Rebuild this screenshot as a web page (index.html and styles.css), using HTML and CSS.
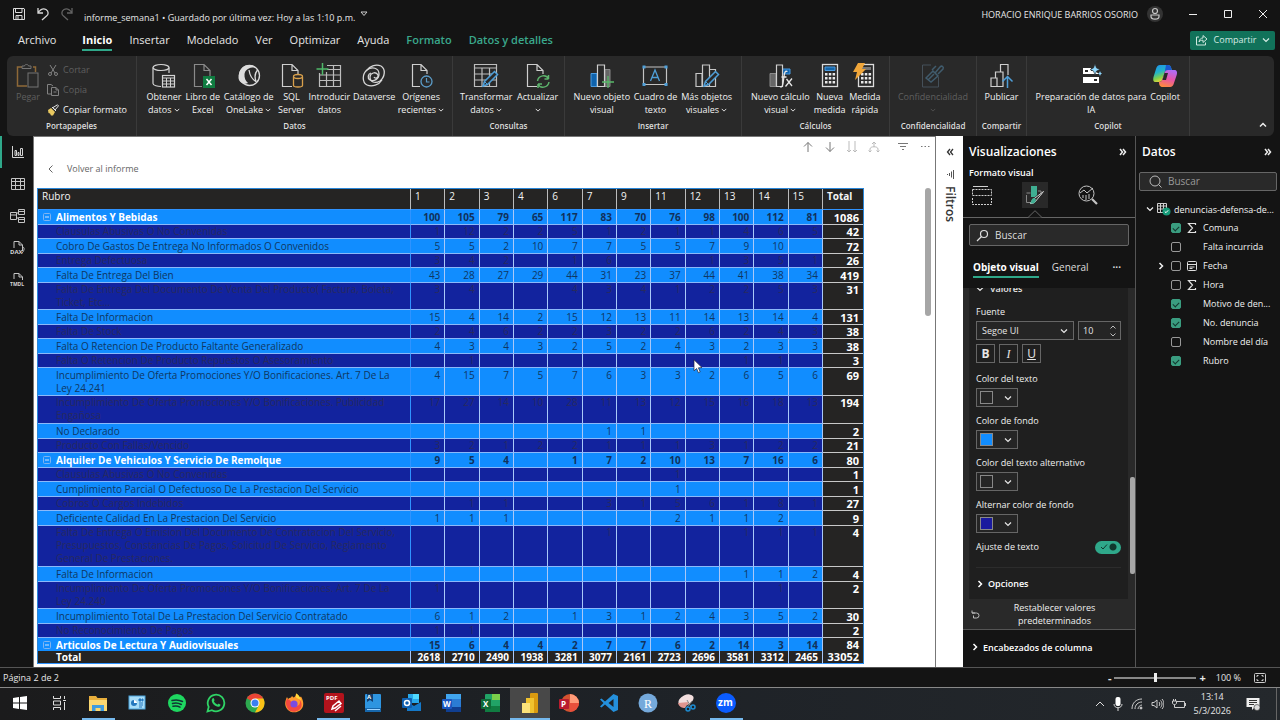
FILE: index.html
```html
<!DOCTYPE html>
<html lang="es">
<head>
<meta charset="utf-8">
<title>informe_semana1</title>
<link rel="stylesheet" href="styles.css">
</head>
<body>
<svg class="defs" aria-hidden="true">
  <symbol id="cv" viewBox="0 0 8 8"><path d="M1 2.5 4 5.5 7 2.5" fill="none" stroke="currentColor" stroke-width="1.2"/></symbol>
  <symbol id="cr" viewBox="0 0 8 8"><path d="M2.5 1 5.5 4 2.5 7" fill="none" stroke="currentColor" stroke-width="1.5"/></symbol>
  <symbol id="minus" viewBox="0 0 8 8"><rect x=".5" y=".5" width="7" height="7" rx="1" fill="none" stroke="#7fb4f0"/><path d="M2 4h4" stroke="#cfe4ff"/></symbol>
  <symbol id="sigma" viewBox="0 0 10 12"><path d="M8.500 3V1.500H1.500L5.500 6 1.500 10.500h7V9" fill="none" stroke="#e0e0e0" stroke-width="1.200"/></symbol>
  <symbol id="pencil" viewBox="0 0 18 18"><path d="M2 16l1.500-4.500L13.500 1.500l3 3L6.500 14.500z" fill="#292929" stroke="#4f9fd8" stroke-width="1.500"/><path d="M4 12l2.500 2.500" stroke="#4f9fd8"/></symbol>
  <symbol id="calc" viewBox="0 0 18 26"><rect x="1.500" y="1.500" width="15" height="22" fill="none" stroke="#dcdcdc" stroke-width="1.300"/><g fill="#e8e8e8"><path d="M4 10h2.500v2.500H4zM7.800 10h2.500v2.500H7.800zM11.600 10h2.500v2.500h-2.500zM4 14h2.500v2.500H4zM7.800 14h2.500v2.500H7.800zM11.600 14h2.500v2.500h-2.500zM4 18h2.500v2.500H4zM7.800 18h2.500v2.500H7.800zM11.600 18h2.500v2.500h-2.500z"/></g></symbol>
</svg>

<header class="titlebar">
  <button class="tb" aria-label="Guardar"><svg width="14" height="14" viewBox="0 0 14 14" fill="none" stroke="#dcdcdc"><path d="M1.500 1.500h10.500l.5.5v10.500h-11z"/><path d="M3.500 1.500v4h6.500v-4M4 12.500v-4h6v4M6 9v3"/></svg></button>
  <button class="tb" aria-label="Deshacer"><svg width="14" height="14" viewBox="0 0 14 14" fill="none" stroke="#d8d8d8" stroke-width="1.300"><path d="M2 1v5h5M2 6C4 3 7 1 10 2.500c3 2 2.500 5 .5 6.500L6 13"/></svg></button>
  <button class="tb off" aria-label="Rehacer"><svg width="14" height="14" viewBox="0 0 14 14" fill="none" stroke="#777" stroke-width="1.300"><path d="M12 1v5H7M12 6C10 3 7 1 4 2.500c-3 2-2.500 5-.5 6.500L8 13"/></svg></button>
  <span class="doc">informe_semana1 • Guardado por última vez: Hoy a las 1:10 p.m.</span>
  <svg class="tri" width="8" height="6" viewBox="0 0 8 6"><path d="M1 1h6L4 4.500z" fill="none" stroke="#ccc"/></svg>
  <span class="user">HORACIO ENRIQUE BARRIOS OSORIO</span>
  <span class="avatar"><svg width="12" height="14" viewBox="0 0 12 14" fill="none" stroke="#c8c8c8" stroke-width="1.200"><circle cx="6" cy="4" r="2.500"/><path d="M2 8h8v1.500C10 13 2 13 2 9.500z"/></svg></span>
  <div class="winbtns">
    <button aria-label="Minimizar"><svg width="10" height="10"><path d="M1 5.500h8" stroke="#eee"/></svg></button>
    <button aria-label="Maximizar"><svg width="10" height="10"><path d="M1.500 1.500h7v7h-7z" stroke="#eee" fill="none"/></svg></button>
    <button aria-label="Cerrar"><svg width="10" height="10"><path d="M1 1l8 8M9 1l-8 8" stroke="#eee"/></svg></button>
  </div>
</header>

<nav class="tabs">
  <a href="#">Archivo</a><a href="#" class="on">Inicio</a><a href="#">Insertar</a><a href="#">Modelado</a><a href="#">Ver</a><a href="#">Optimizar</a><a href="#">Ayuda</a><a href="#" class="ctx">Formato</a><a href="#" class="ctx">Datos y detalles</a>
  <button class="share"><svg width="13" height="12" viewBox="0 0 13 12" fill="none" stroke="#cfe8df"><path d="M4 3H1.500v8h9V8.500M4 8c.5-3 2-4 4-4V1.500L12 5 8 8.500V6.200C6 6.200 5 6.500 4 8z"/></svg><span>Compartir</span><svg width="8" height="8"><use href="#cv"/></svg></button>
</nav>

<section class="ribbon">
  <div class="group g-clip">
    <div class="clip">
      <button class="rb off"><svg width="24" height="26" viewBox="0 0 24 26" fill="none"><path d="M6 4H1.500v19H11M17 4h2.500v5" stroke="#a87a3c" stroke-width="1.500"/><path d="M6 5.500V3h2.500c0-2 4-2 4 0H15v2.500z" stroke="#888"/><rect x="12" y="10" width="10" height="14" stroke="#888"/></svg><span>Pegar</span></button>
      <div class="clip-list">
        <button class="sm off"><svg width="12" height="12" viewBox="0 0 12 12" fill="none" stroke="#999"><path d="M3 1l5 8M9 1L4 9"/><circle cx="3" cy="10" r="1.500"/><circle cx="9" cy="10" r="1.500"/></svg><span>Cortar</span></button>
        <button class="sm off"><svg width="12" height="12" viewBox="0 0 12 12" fill="none" stroke="#999"><path d="M4 10H.5V.5H4L6 2M4.500 3.500H9L11.500 6v5.500h-7zM9 3.500V6h2.500M6.500 8h3"/></svg><span>Copia</span></button>
        <button class="sm"><svg width="12" height="12" viewBox="0 0 12 12"><path d="M1 6l3-2 4 4-2 3.500H4L3 9.500 1.500 9z" fill="#e8c860"/><path d="M5 3l4 4M6 3.500L10.500.8l1 1L8 6z" fill="#292929" stroke="#e8e8e8"/></svg><span>Copiar formato</span></button>
      </div>
    </div>
    <h2>Portapapeles</h2>
  </div>
  <div class="group g-data">
    <div class="btns">
      <button class="rb"><svg width="24" height="26" viewBox="0 0 24 26" fill="none" stroke="#d4d4d4" stroke-width="1.200"><ellipse cx="9" cy="4.500" rx="8" ry="3"/><path d="M1 4.500v16c0 2 5 3 8 3M17 4.500V10"/><rect x="10.500" y="12.500" width="12" height="11.500" fill="#292929"/><path d="M10.500 15h12M10.500 18h12M10.500 21h12M14.500 15v9M18.500 15v9" stroke-width="1"/></svg><span>Obtener<br>datos <svg class="c"><use href="#cv"/></svg></span></button>
      <button class="rb"><svg width="24" height="26" viewBox="0 0 24 26" fill="none"><path d="M11 23.500H3.500v-22H13l6 6V13M13 1.500v6h6" stroke="#8a8a8a" stroke-width="1.200"/><rect x="12" y="13" width="12" height="12" fill="#107c41"/><path d="M15.500 16l5 6M20.500 16l-5 6" stroke="#fff" stroke-width="1.500"/></svg><span>Libro de<br>Excel</span></button>
      <button class="rb"><svg width="24" height="26" viewBox="0 0 24 26" fill="none"><circle cx="12.500" cy="12.500" r="10" stroke="#dcdcdc" stroke-width="1.300"/><path d="M1.500 15C1.500 8 5 2.500 11 2.200c4-.4 6 .8 7 2C12 4 8 7 7.500 11c-.3 4 1 7 3.500 9-3 2-9 0-9.500-5z" fill="#dcdcdc"/><path d="M12 7c1 7 4 10 7.500 12M20.500 7C18 10 17 13 19 18" stroke="#dcdcdc" stroke-width="1.300"/></svg><span>Catálogo de<br>OneLake <svg class="c"><use href="#cv"/></svg></span></button>
      <button class="rb"><svg width="24" height="26" viewBox="0 0 24 26" fill="none"><path d="M12 23.500H2.500v-22H12l6 6V11M12 1.500v6h6" stroke="#cfcfcf" stroke-width="1.200"/><path d="M13.500 14v8.500c0 2 9 2 9 0V14" fill="#292929" stroke="#d9a04c" stroke-width="1.300"/><ellipse cx="18" cy="13.500" rx="4.500" ry="2" fill="#292929" stroke="#d9a04c" stroke-width="1.300"/></svg><span>SQL<br>Server</span></button>
      <button class="rb"><svg width="26" height="26" viewBox="0 0 26 26" fill="none"><path d="M3.500 10v13.500h21v-21H11M3.500 12h21M3.500 17.500h21M10.500 9v14.500M17.500 3v20.500M11 6.500h13.500" stroke="#bdbdbd" stroke-width="1.200"/><path d="M6.500 0v12M.5 6h12" stroke="#4fb96a" stroke-width="1.500"/></svg><span>Introducir<br>datos</span></button>
      <button class="rb"><svg width="26" height="26" viewBox="0 0 26 26" fill="none" stroke="#d8d8d8" stroke-width="1.300"><path d="M20 3c5 3 4 11-1 15-5 3-10 1-10-4 0-4 6-6 8-2 1 3-3 4-4 2"/><path d="M6 22C1 19 1 11 6 7c5-4 12-2 12 4 0 5-5 8-9 6-3-2-2-6 1-7"/><path d="M20 3C15 1 8 3 5 8M6 22c5 2 12 0 15-5"/></svg><span>Dataverse</span></button>
      <button class="rb"><svg width="24" height="26" viewBox="0 0 24 26" fill="none"><path d="M11 23.500H3.500v-22H12l6 6V11M12 1.500v6h6" stroke="#cfcfcf" stroke-width="1.200"/><circle cx="17.500" cy="18.500" r="5.500" fill="#292929" stroke="#5b9cc8" stroke-width="1.300"/><path d="M17.500 15v4h3" stroke="#5b9cc8" stroke-width="1.200"/></svg><span>Orígenes<br>recientes <svg class="c"><use href="#cv"/></svg></span></button>
    </div>
    <h2>Datos</h2>
  </div>
  <div class="group g-query">
    <div class="btns">
      <button class="rb"><svg width="26" height="26" viewBox="0 0 26 26"><path d="M1.500 1.500h22v22h-22zM1.500 5h22M1.500 11h22M1.500 17h22M9 5v18.500M16.500 5v18.500" fill="none" stroke="#bdbdbd" stroke-width="1.200"/><use href="#pencil" x="8" y="7" width="18" height="18"/></svg><span>Transformar<br>datos <svg class="c"><use href="#cv"/></svg></span></button>
      <button class="rb"><svg width="24" height="26" viewBox="0 0 24 26" fill="none"><path d="M11 23.500H1.500v-22H11l6 6V11M11 1.500v6h6" stroke="#cfcfcf" stroke-width="1.200"/><path d="M11.500 18c1-6 9-7 11-2v-4m0 4h-4M23 19c-1 6-9 7-11 2v4m0-4h4" stroke="#5db36c" stroke-width="1.500"/></svg><span>Actualizar<br><svg class="c"><use href="#cv"/></svg></span></button>
    </div>
    <h2>Consultas</h2>
  </div>
  <div class="group g-insert">
    <div class="btns">
      <button class="rb"><svg width="26" height="26" viewBox="0 0 26 26" fill="none"><path d="M2 10.500h6v13H2z" fill="#0f63ad" stroke="#4a9be0"/><path d="M16 6.500h5v17h-5z" fill="#666" stroke="#888"/><path d="M8.500 2h7v21.500h-7z" fill="#292929" stroke="#d0d0d0" stroke-width="1.200"/><path d="M19 13v12M13 19h12" stroke="#57b868" stroke-width="1.300"/></svg><span>Nuevo objeto<br>visual</span></button>
      <button class="rb"><svg width="26" height="26" viewBox="0 0 26 26" fill="none"><path d="M1.500 4h23v17.500h-23z" stroke="#c4c4c4" stroke-width="1.200"/><path d="M8.500 18L13 7l4.500 11M10 14.500h6" stroke="#4f9fd8" stroke-width="1.300"/><path d="M.5 2.500h3v3h-3zM22.500 2.500h3v3h-3zM.5 20h3v3h-3zM22.500 20h3v3h-3z" fill="#4f9fd8"/></svg><span>Cuadro de<br>texto</span></button>
      <button class="rb"><svg width="26" height="26" viewBox="0 0 26 26" fill="none"><path d="M2 10.500h6v13H2zM15.500 6.500h6v17h-6zM8.500 2h7v21.500h-7z" fill="#292929" stroke="#c8c8c8" stroke-width="1.200"/><use href="#pencil" x="8" y="7" width="18" height="18"/></svg><span>Más objetos<br>visuales <svg class="c"><use href="#cv"/></svg></span></button>
    </div>
    <h2>Insertar</h2>
  </div>
  <div class="group g-calc">
    <div class="btns">
      <button class="rb"><svg width="26" height="26" viewBox="0 0 26 26" fill="none"><path d="M3 10.500h6v13H3z" fill="#666" stroke="#8a8a8a"/><path d="M15 6h8v5h-8z" fill="#0f63ad" stroke="#4a9be0"/><path d="M9.500 2h6v21.500h-6z" fill="#292929" stroke="#d0d0d0" stroke-width="1.200"/><path d="M20.500 8.500c-2.500-1-3 1-3.500 5l-1 7c-.5 3-1.500 4-3 3M14.500 14h5M19.500 16l5.500 7M25 15.500L18.500 23.500" stroke="#e6e6e6" stroke-width="1.300"/></svg><span>Nuevo cálculo<br>visual <svg class="c"><use href="#cv"/></svg></span></button>
      <button class="rb"><svg width="18" height="26" viewBox="0 0 18 26"><use href="#calc" width="18" height="26"/><path d="M4 4h10v3.500H4z" fill="#1565a8" stroke="#4a9be0"/></svg><span>Nueva<br>medida</span></button>
      <button class="rb"><svg width="26" height="26" viewBox="0 0 26 26"><use href="#calc" x="5" width="18" height="26"/><path d="M8 4h11v3H8z" fill="#777"/><path d="M6 0h7l-3 6h4L3 17l2-8H1z" fill="#f0a63a"/></svg><span>Medida<br>rápida</span></button>
    </div>
    <h2>Cálculos</h2>
  </div>
  <div class="group g-conf">
    <div class="btns">
      <button class="rb off"><svg width="26" height="26" viewBox="0 0 26 26" fill="none"><path d="M11 2H2.500v22h16V14" stroke="#4c5a66"/><path d="M6 15l7-7 5 5-7 6zM12 7l4-4M15 10l5-6c2-2 4 0 3 2l-5 5M8 17l6-6" stroke="#47697f" stroke-width="1.500"/></svg><span>Confidencialidad<br><svg class="c"><use href="#cv"/></svg></span></button>
    </div>
    <h2>Confidencialidad</h2>
  </div>
  <div class="group g-pub">
    <div class="btns">
      <button class="rb"><svg width="26" height="26" viewBox="0 0 26 26" fill="none"><path d="M2 15h6v8.500H2zM6.500 15V9H14v14.500H8M11.500 9V1.500h7.500V12" stroke="#cfcfcf" stroke-width="1.200"/><path d="M18.500 25V14M13.500 18.500l5-5 5 5" stroke="#4f9fd8" stroke-width="1.500"/></svg><span>Publicar</span></button>
    </div>
    <h2>Compartir</h2>
  </div>
  <div class="group g-cop">
    <div class="btns">
      <button class="rb"><svg width="26" height="26" viewBox="0 0 26 26"><path d="M5 5h8v6H5zM13 8h4l4 3h-8zM5 14h16v6H5z" fill="#fff"/><path d="M7 7h3v2H7zM16 16h3v2h-3z" fill="#292929"/><path d="M17 1l1.500 4L22 6.500 18.500 8 17 12l-1.500-4L12 6.500 15.500 5z" fill="#8fd8ff" stroke="#292929" stroke-width=".6"/><path d="M22 8l.7 1.800L24 10.500l-1.300.7L22 13l-.7-1.800-1.300-.7 1.300-.7z" fill="#8fd8ff"/></svg><span>Preparación de datos para<br>IA</span></button>
      <button class="rb"><svg width="26" height="26" viewBox="0 0 26 26"><defs><linearGradient id="k1" x1="0" y1="0" x2=".4" y2="1"><stop offset="0" stop-color="#1f8ff0"/><stop offset=".45" stop-color="#22b3c8"/><stop offset=".75" stop-color="#7fd04a"/><stop offset="1" stop-color="#f5d33a"/></linearGradient><linearGradient id="k2" x1=".6" y1="0" x2=".3" y2="1"><stop offset="0" stop-color="#b06cf5"/><stop offset=".5" stop-color="#e855a8"/><stop offset="1" stop-color="#ff8a3c"/></linearGradient></defs><path d="M8 2h8c3 0 3 3 4 5h-4c-2 0-3 1-3.500 3l-2 6c-.5 2-1.500 3-4 3H4c-3 0-3-2-2.500-5L4 6c.7-2.500 2-4 4-4z" fill="url(#k1)"/><path d="M14 2h2c3 0 3 3 4 5h-4c-2 0-3 1-3.500 3z" fill="#1b57d0"/><path d="M18 24h-7c-3 0-4-2-4-5 2 0 3-1 3.500-3l2-6c.6-2 1.500-3 3.500-3h6c3 0 3.500 2 2.700 5L22 20c-.7 2.500-2 4-4 4z" fill="url(#k2)"/><path d="M12.500 10l3.500 0-2 7-3.500 0z" fill="#292929"/></svg><span>Copilot</span></button>
    </div>
    <h2>Copilot</h2>
  </div>
  <button class="collapse" aria-label="Contraer cinta"><svg width="8" height="8" viewBox="0 0 8 8"><path d="M1 5.500 4 2.500 7 5.500" fill="none" stroke="#eee" stroke-width="1.500"/></svg></button>
</section>

<main class="work">
  <nav class="rail">
    <button class="on" aria-label="Informe"><svg width="12" height="12" viewBox="0 0 12 12" fill="none" stroke="#d4d4d4"><path d="M.5 0v11.500H12M3 9.500v-5h1.500v5zM6 9.500v-3h1v3zM8.500 9.500v-7h2v7z"/></svg></button>
    <button aria-label="Tabla"><svg width="14" height="14" viewBox="0 0 14 14" fill="none" stroke="#c4c4c4"><path d="M.5 1.500h13v11H.5zM.5 4.500h13M.5 8.500h13M4.500 1.500v11M9.500 1.500v11"/></svg></button>
    <button aria-label="Modelo"><svg width="16" height="16" viewBox="0 0 16 16" fill="none" stroke="#c4c4c4"><path d="M.5 4.500h6v7h-6zM.5 7h6M8.500 1.500h6v5h-6zM8.500 3.500h6M8.500 9.500h6v5h-6zM8.500 11.500h6M6.500 5H8M6.500 10H8"/></svg></button>
    <button aria-label="DAX"><svg width="16" height="16" viewBox="0 0 16 16" fill="none" stroke="#c4c4c4"><path d="M4 8V1.500h5L12.500 5v6M9 1.500V5h3.500M13 7c2 1 1 4-1 6"/><text x="0" y="14">DAX</text></svg></button>
    <button aria-label="TMDL"><svg width="16" height="16" viewBox="0 0 16 16" fill="none" stroke="#c4c4c4"><path d="M4 7V1.500h5L12.500 5v3M9 1.500V5h3.500"/><text x="0" y="14" class="t5">TMDL</text></svg></button>
  </nav>

  <section class="canvas">
    <div class="tools">
      <svg width="12" height="12" viewBox="0 0 12 12"><path d="M6 11V1.500M2 5.500l4-4 4 4"/></svg>
      <svg width="12" height="12" viewBox="0 0 12 12"><path d="M6 1v9.500M2 6.500l4 4 4-4"/></svg>
      <svg class="dim" width="12" height="12" viewBox="0 0 12 12"><path d="M3 0v11M1 9l2 2 2-2M9 0v11M7 9l2 2 2-2"/></svg>
      <svg class="dim" width="12" height="12" viewBox="0 0 12 12"><path d="M6 1v5M6 1L4 3M6 1l2 2M2 11V8c0-3 8-3 8 0v3M.5 9.500L2 11l1.500-1.500M8.500 9.500L10 11l1.500-1.500"/></svg>
      <svg class="gap" width="12" height="12" viewBox="0 0 12 12"><path d="M1 2.500h10M3 5.500h6M5 8.500h2"/></svg>
      <svg width="12" height="12" viewBox="0 0 12 12"><path d="M2 5.500h1.500M5.500 5.500H7M9 5.500h1.500"/></svg>
    </div>
    <button class="back"><svg width="8" height="8" viewBox="0 0 8 8"><path d="M5.500.5 2 4l3.500 3.500" fill="none" stroke="#666"/></svg><span>Volver al informe</span></button>
    <div class="visual">
<table class="matrix">
<colgroup><col class="c-name"><col span="12"><col class="c-total"></colgroup>
<thead><tr><th>Rubro<th>1<th>2<th>3<th>4<th>6<th>7<th>9<th>11<th>12<th>13<th>14<th>15<th>Total</tr></thead>
<tbody>
<tr class="cat"><th><svg><use href="#minus"/></svg>Alimentos Y Bebidas<td>100<td>105<td>79<td>65<td>117<td>83<td>70<td>76<td>98<td>100<td>112<td>81<td>1086</tr>
<tr class="alt"><th>Clausulas Abusivas O No Convenidas<td>1<td>12<td>2<td>2<td>5<td>1<td>2<td>1<td>1<td>4<td>6<td>5<td>42</tr>
<tr><th>Cobro De Gastos De Entrega No Informados O Convenidos<td>5<td>5<td>2<td>10<td>7<td>7<td>5<td>5<td>7<td>9<td>10<td><td>72</tr>
<tr class="alt"><th>Entrega Defectuosa<td>3<td>4<td>2<td><td>1<td>6<td><td><td>1<td>3<td>5<td>1<td>26</tr>
<tr><th>Falta De Entrega Del Bien<td>43<td>28<td>27<td>29<td>44<td>31<td>23<td>37<td>44<td>41<td>38<td>34<td>419</tr>
<tr class="alt"><th>Falta De Entrega Del Documento De Venta Del Producto( Factura, Boleta, Ticket, Etc...<td>3<td>4<td><td><td>4<td>3<td>4<td>1<td>2<td>2<td>5<td>3<td>31</tr>
<tr><th>Falta De Informacion<td>15<td>4<td>14<td>2<td>15<td>12<td>13<td>11<td>14<td>13<td>14<td>4<td>131</tr>
<tr class="alt"><th>Falta De Stock<td>2<td>4<td>6<td>2<td>2<td>3<td>2<td>2<td>6<td>2<td>4<td>3<td>38</tr>
<tr><th>Falta O Retencion De Producto Faltante Generalizado<td>4<td>3<td>4<td>3<td>2<td>5<td>2<td>4<td>3<td>2<td>3<td>3<td>38</tr>
<tr class="alt"><th>Falta O Retencion De Producto Repuestos O Asesoramiento<td><td>1<td><td><td><td><td><td><td><td>1<td>1<td><td>3</tr>
<tr><th>Incumplimiento De Oferta Promociones Y/O Bonificaciones. Art. 7 De La Ley 24.241<td>4<td>15<td>7<td>5<td>7<td>6<td>3<td>3<td>2<td>6<td>5<td>6<td>69</tr>
<tr class="alt tall"><th>Incumplimiento De Oferta Promociones Y/O Bonificaciones. Publicidad Engañosa<td>17<td>27<td>14<td>10<td>28<td>11<td>13<td>12<td>15<td>16<td>18<td>13<td>194</tr>
<tr><th>No Declarado<td><td><td><td><td><td>1<td>1<td><td><td><td><td><td>2</tr>
<tr class="alt"><th>Producto Con Fallas/Vencido<td>3<td>2<td>1<td>2<td>2<td>1<td>1<td>1<td>3<td>1<td>2<td>2<td>21</tr>
<tr class="cat"><th><svg><use href="#minus"/></svg>Alquiler De Vehiculos Y Servicio De Remolque<td>9<td>5<td>4<td><td>1<td>7<td>2<td>10<td>13<td>7<td>16<td>6<td>80</tr>
<tr class="alt"><th>Clausulas Abusivas O No Convenidas<td><td><td><td><td><td><td><td>1<td><td><td><td><td>1</tr>
<tr><th>Cumplimiento Parcial O Defectuoso De La Prestacion Del Servicio<td><td><td><td><td><td><td><td>1<td><td><td><td><td>1</tr>
<tr class="alt"><th>Cobros O Cargos Indebidos<td><td>1<td>1<td><td><td>3<td>1<td>5<td>6<td>1<td>8<td>1<td>27</tr>
<tr><th>Deficiente Calidad En La Prestacion Del Servicio<td>1<td>1<td>1<td><td><td><td><td>2<td>1<td>1<td>2<td><td>9</tr>
<tr class="alt tall"><th>Falta De Entrega O Emision Del Documento De Contratacion Del Servicio, Presupuestos, Constancias De Pagos, Solicitud De Servicio, Reglamento General De Prestaciones.<td><td><td><td><td><td>1<td><td><td><td>1<td>1<td>1<td>4</tr>
<tr><th>Falta De Informacion<td><td><td><td><td><td><td><td><td><td>1<td>1<td>2<td>4</tr>
<tr class="alt"><th>Incumplimiento De Oferta Promociones Y/O Bonificaciones. Art. 7 De La Ley 24.240<td>1<td><td><td><td><td><td><td><td><td><td>1<td><td>2</tr>
<tr><th>Incumplimiento Total De La Prestacion Del Servicio Contratado<td>6<td>1<td>2<td><td>1<td>3<td>1<td>2<td>4<td>3<td>5<td>2<td>30</tr>
<tr class="alt"><th>No Reconocimiento De Pagos<td>1<td>1<td><td><td><td><td><td><td><td><td><td><td>2</tr>
<tr class="cat last"><th><svg><use href="#minus"/></svg>Articulos De Lectura Y Audiovisuales<td>15<td>6<td>4<td>4<td>2<td>7<td>7<td>6<td>2<td>14<td>3<td>14<td>84</tr>
</tbody>
<tfoot><tr><th>Total<td>2618<td>2710<td>2490<td>1938<td>3281<td>3077<td>2161<td>2723<td>2696<td>3581<td>3312<td>2465<td>33052</tr></tfoot>
</table>
      <div class="vscroll"></div>
    </div>
    <svg class="cursor" width="10" height="15" viewBox="0 0 10 15"><path d="M1 .8v11l2.600-2.300 1.800 4.200 1.800-.8L5.400 8.800 9 8.600z" fill="#fff" stroke="#223" stroke-width=".7"/></svg>
  </section>

  <aside class="filters">
    <svg width="8" height="8" viewBox="0 0 8 8"><path d="M4 1 1.500 4 4 7M7 1 4.500 4 7 7" fill="none" stroke="#333" stroke-width="1.300"/></svg>
    <svg width="10" height="9" viewBox="0 0 10 9" stroke="#555" fill="none"><path d="M8.500 0v9M6.500 1.500v6M4.500 3v3M2 4.500h1"/></svg>
    <h2>Filtros</h2>
  </aside>

  <aside class="viz">
    <div class="phead"><h2>Visualizaciones</h2><svg width="8" height="8" viewBox="0 0 8 8"><path d="M1 1l2.500 3L1 7M4 1l2.500 3L4 7" fill="none" stroke="#eee" stroke-width="1.500"/></svg></div>
    <h3>Formato visual</h3>
    <div class="modes">
      <button aria-label="Compilar"><svg width="20" height="20" viewBox="0 0 20 20" fill="none" stroke="#d0d0d0"><path d="M1 1.500h15"/><path d="M.5 4.500h19v6H.5zM.5 13v6.500h19V13" stroke-dasharray="2 1"/></svg></button>
      <button class="on" aria-label="Formato"><svg width="20" height="20" viewBox="0 0 20 20"><path d="M1.500 10v7.500H7" fill="none" stroke="#888"/><path d="M6 1h6v9l-2 2H6z" fill="#3fae92"/><path d="M1.500 8h4M13 6l3 0v4" fill="none" stroke="#888"/><path d="M18.500 6.500 10 17c-2 2-4 1.500-5 1.500 2-1 1-3 3-4z" fill="#292929" stroke="#cfcfcf"/><path d="M9 13c-3 0-2 4-4 5.500 3 .5 6-.5 6-4z" fill="#3fae92"/></svg></button>
      <button aria-label="Analizar"><svg width="20" height="20" viewBox="0 0 20 20" fill="none" stroke="#c4c4c4"><circle cx="8.500" cy="8.500" r="7.500"/><path d="M14 14l5 5" stroke-width="2.200"/><path d="M2 8l4-3 3 3 6-5M5 13v-3M8 15v-5M11 14V9" /></svg></button>
      <svg class="notch" width="14" height="8" viewBox="0 0 14 8"><path d="M0 7.500 7 .7l7 6.800" fill="#141414" stroke="#666"/></svg>
    </div>
    <div class="search s1"><svg width="13" height="13" viewBox="0 0 13 13" fill="none" stroke="#ddd" stroke-width="1.200"><circle cx="8" cy="5" r="3.500"/><path d="M5.500 7.500 1 12"/></svg><input type="text" placeholder="Buscar" aria-label="Buscar en formato"></div>
    <div class="subtabs"><a href="#" class="on">Objeto visual</a><a href="#">General</a><span>···</span></div>
    <div class="props">
      <div class="card">
        <h4><svg width="8" height="8"><use href="#cv"/></svg>Valores</h4>
        <label for="font">Fuente</label>
        <div class="line">
          <span class="sel"><select id="font"><option>Segoe UI</option></select><svg width="8" height="8"><use href="#cv"/></svg></span>
          <span class="num"><input type="text" value="10" aria-label="Tamaño"><svg width="6" height="12" viewBox="0 0 6 12" fill="none" stroke="#bbb"><path d="M.5 3.500 3 1l2.500 2.500M.5 8.500 3 11l2.500-2.500"/></svg></span>
        </div>
        <div class="line biu"><button><b>B</b></button><button><i>I</i></button><button><u>U</u></button></div>
        <label for="p1">Color del texto</label><button class="pick" id="p1"><i class="sw"></i><svg width="8" height="8"><use href="#cv"/></svg></button>
        <label for="p2">Color de fondo</label><button class="pick" id="p2"><i class="sw light"></i><svg width="8" height="8"><use href="#cv"/></svg></button>
        <label for="p3">Color del texto alternativo</label><button class="pick" id="p3"><i class="sw"></i><svg width="8" height="8"><use href="#cv"/></svg></button>
        <label for="p4">Alternar color de fondo</label><button class="pick" id="p4"><i class="sw deep"></i><svg width="8" height="8"><use href="#cv"/></svg></button>
        <div class="toggle"><label for="wrap">Ajuste de texto</label><span class="tg"><input type="checkbox" id="wrap" checked><svg width="8" height="8" viewBox="0 0 8 8"><path d="M1 4l2 2 4-4.500" fill="none" stroke="#10382d"/></svg></span></div>
        <button class="more"><svg width="8" height="8"><use href="#cr"/></svg>Opciones</button>
      </div>
      <button class="reset"><svg width="9" height="9" viewBox="0 0 9 9" fill="none" stroke="#bbb"><path d="M1 .5V3h3M1 3h4.500a2.500 2.500 0 0 1 0 5H2.500V5.500"/></svg><span>Restablecer valores predeterminados</span></button>
      <div class="thumb"></div>
    </div>
    <button class="more col"><svg width="8" height="8"><use href="#cr"/></svg>Encabezados de columna</button>
  </aside>

  <aside class="data">
    <div class="phead"><h2>Datos</h2><svg width="8" height="8" viewBox="0 0 8 8"><path d="M1 1l2.500 3L1 7M4 1l2.500 3L4 7" fill="none" stroke="#eee" stroke-width="1.500"/></svg></div>
    <div class="search s2"><svg width="13" height="13" viewBox="0 0 13 13" fill="none" stroke="#bbb"><circle cx="6" cy="6" r="5"/><path d="M9.500 9.500 12.500 12.500"/></svg><input type="text" placeholder="Buscar" aria-label="Buscar en datos"></div>
    <div class="root"><svg width="8" height="8"><use href="#cv"/></svg><svg width="16" height="14" viewBox="0 0 16 14" fill="none"><path d="M1.500 1.500h9v9h-9zM1.500 4h9M1.500 7h9M4.500 1.500v9M7.500 1.500v9" stroke="#d0d0d0"/><circle cx="10.500" cy="9.500" r="4" fill="#159a78"/><path d="M8.800 9.500l1.200 1.200 2.200-2.400" stroke="#fff"/></svg><span>denuncias-defensa-de...</span></div>
    <ul class="fields">
      <li><i></i><input type="checkbox" id="f1" checked><svg width="10" height="12"><use href="#sigma"/></svg><label for="f1">Comuna</label></li>
      <li><i></i><input type="checkbox" id="f2"><i class="ic"></i><label for="f2">Falta incurrida</label></li>
      <li><svg width="8" height="8"><use href="#cr"/></svg><input type="checkbox" id="f3"><svg width="10" height="12" viewBox="0 0 10 12" fill="none" stroke="#ddd"><rect x=".5" y="1.500" width="9" height="9" rx="1"/><path d="M.5 4.500h9M2.500 7h5M2.500 8.500h3"/></svg><label for="f3">Fecha</label></li>
      <li><i></i><input type="checkbox" id="f4"><svg width="10" height="12"><use href="#sigma"/></svg><label for="f4">Hora</label></li>
      <li><i></i><input type="checkbox" id="f5" checked><i class="ic"></i><label for="f5">Motivo de den...</label></li>
      <li><i></i><input type="checkbox" id="f6" checked><i class="ic"></i><label for="f6">No. denuncia</label></li>
      <li><i></i><input type="checkbox" id="f7"><i class="ic"></i><label for="f7">Nombre del día</label></li>
      <li><i></i><input type="checkbox" id="f8" checked><i class="ic"></i><label for="f8">Rubro</label></li>
    </ul>
  </aside>
</main>

<footer class="status">
  <span>Página 2 de 2</span>
  <div class="zoom"><b>-</b><input type="range" min="0" max="100" value="50" aria-label="Zoom"><b>+</b><span>100 %</span><svg width="12" height="10" viewBox="0 0 12 10" fill="none" stroke="#ccc"><rect x=".5" y=".5" width="11" height="9" rx="1"/><path d="M3 4V2.500h1.500M9 4V2.500H7.500M3 6v1.500h1.500M9 6v1.500H7.500"/></svg></div>
</footer>

<div class="taskbar">
  <div class="apps">
    <button aria-label="Inicio"><svg width="16" height="16" viewBox="0 0 16 16" fill="#fff"><path d="M1 3l6-.9v5.400H1zM8 2l7-1v6.500H8zM1 8.500h6v5.400L1 13zM8 8.500h7V15l-7-1z"/></svg></button>
    <button aria-label="Vista de tareas"><svg width="14" height="14" viewBox="0 0 14 14" fill="none" stroke="#ddd"><path d="M1.500 0v2.500h7V0M1.500 5h7v4h-7zM1.500 14v-2.500h7V14M12.500 0v3M12.500 6v8M11 4.500h3"/></svg></button>
    <button class="run" aria-label="Explorador"><svg width="20" height="18" viewBox="0 0 20 18"><path d="M1 2h7l1.500 2H19v12H1z" fill="#e8ae3c"/><path d="M1 6h18v11H1z" fill="#fbd872"/><path d="M4 17v-6h12v6h-3.500v-3h-5v3z" fill="#3f9ce0"/></svg></button>
    <button aria-label="Panel de control"><svg width="18" height="16" viewBox="0 0 18 16"><rect x="1" y="1" width="16" height="13" fill="#a8ddf8" stroke="#4aa3dc"/><circle cx="6" cy="8" r="3" fill="#2577bd"/><path d="M6 8V5a3 3 0 0 1 3 3z" fill="#fff"/><path d="M11 4h2v2h-2zM14 4h1v2h-1zM11 8h4M11 10h4M11 12h3" fill="#2577bd" stroke="#2577bd"/></svg></button>
    <button aria-label="Spotify"><svg width="18" height="18" viewBox="0 0 18 18"><circle cx="9" cy="9" r="9" fill="#1ed760"/><path d="M4 6.500c4-1.200 7-.8 10.500 1M4.500 9.500c3-1 6-.6 8.800 1M5 12.300c2.500-.7 5-.4 7 .8" fill="none" stroke="#133" stroke-width="1.500" stroke-linecap="round"/></svg></button>
    <button aria-label="WhatsApp"><svg width="20" height="20" viewBox="0 0 20 20"><path d="M1.500 18.500l1.200-4.600a8.300 8.300 0 1 1 3.200 3.300z" fill="#1d1f21" stroke="#2fd366" stroke-width="1.800"/><path d="M6.500 5.500c1-1 1.500 0 2 1.500.2.700-.8 1-.5 1.600.8 1.400 1.700 2.200 3.200 2.800.6.200 1-.9 1.600-.7 1.500.7 2.200.9 1.200 2.200-1.500 1.800-4.600.3-6-1.100-1.500-1.500-3.300-4.300-1.500-6.300z" fill="#2fd366"/></svg></button>
    <button aria-label="Chrome"><svg width="20" height="20" viewBox="0 0 20 20"><circle cx="10" cy="10" r="9.500" fill="#2da94f"/><path d="M10 10 1.800 5.200A9.500 9.500 0 0 1 18.200 5.200z" fill="#ea4335"/><path d="M10 5.500h8.400A9.500 9.500 0 0 1 10 19.500L14 12z" fill="#fbc116"/><circle cx="10" cy="10" r="4.500" fill="#fff"/><circle cx="10" cy="10" r="3.500" fill="#3b7ff0"/></svg></button>
    <button aria-label="Firefox"><svg width="20" height="20" viewBox="0 0 20 20"><path d="M3 4l1 2c1-1 2-1.500 3-1.500L8 3l1.500 1.500C11 4 12 2 12 .5c3 1.500 3.500 4 3.500 4l1.500-1c3 5 3 10 0 13-3 3.500-10 4-13.500 0S1 8 3 4z" fill="#ff9a2e"/><path d="M3 6c1 0 5 2 4 4-1 3 3 5 6 3 3-1 4-4 2-7 4 4 3 9 0 11-4 3-9 2-11-1S1 9 3 6z" fill="#f4493f"/><circle cx="10" cy="11" r="3.600" fill="#7a4be0"/><path d="M12 .5c3 1.500 4.500 4 5 7-2-2-4-2-5-3z" fill="#ffd93b"/></svg></button>
    <button class="run" aria-label="PDF"><svg width="20" height="20" viewBox="0 0 20 20"><rect width="20" height="20" rx="2" fill="#b3131c"/><path d="M8 16l1-3 6-5 2 2.500-6 4.500zM11 18l6-5" fill="none" stroke="#fff" stroke-width="1.500"/><text x="2" y="7" class="t6">PDF</text></svg></button>
    <button aria-label="Diccionario"><svg width="18" height="20" viewBox="0 0 18 20"><rect x="1" y="1" width="16" height="18" rx="1" fill="#2e95e0"/><path d="M1 15h16v4H1z" fill="#1767ab"/><path d="M3 16.500h13" stroke="#9fd4ff"/><path d="M1 1h8v8l-3-2-3 2V1z" fill="#123f70"/><text x="3" y="6" class="t6">A</text></svg></button>
    <button aria-label="Outlook"><svg width="20" height="20" viewBox="0 0 20 20"><path d="M6 1h11v9H6z" fill="#28a8ea"/><path d="M11 1h6v5h-6z" fill="#50d9ff"/><path d="M5 9l7 4 7-4v9H5z" fill="#1579c9"/><rect y="5" width="10" height="10" rx="1" fill="#0f5fb0"/><circle cx="5" cy="10" r="2.500" fill="none" stroke="#fff" stroke-width="1.500"/></svg></button>
    <button aria-label="Word"><svg width="20" height="20" viewBox="0 0 20 20"><rect x="4" y="1" width="15" height="18" rx="1" fill="#2b7cd3"/><path d="M4 1h15v5H4z" fill="#41a5ee"/><path d="M4 14h15v5H4z" fill="#103f91"/><rect y="6" width="10" height="10" rx="1" fill="#1a57c0"/><text x="1" y="14" class="t8">W</text></svg></button>
    <button aria-label="Excel"><svg width="20" height="20" viewBox="0 0 20 20"><rect x="4" y="1" width="15" height="18" rx="1" fill="#21a366"/><path d="M11 1h8v6h-8z" fill="#7ad04a"/><path d="M4 13h15v6H4z" fill="#107c41"/><rect y="6" width="10" height="10" rx="1" fill="#0e6a37"/><text x="2" y="14" class="t8">X</text></svg></button>
    <button class="run act" aria-label="Power BI"><svg width="18" height="20" viewBox="0 0 18 20"><rect x="9" y="0" width="8" height="20" rx="1" fill="#d99a10"/><path d="M5 5h8v15H5z" fill="#f0c22e"/><path d="M1 10h8v10H1z" fill="#fbe27a"/></svg></button>
    <button aria-label="PowerPoint"><svg width="20" height="20" viewBox="0 0 20 20"><circle cx="11" cy="10" r="9" fill="#d35230"/><path d="M11 1a9 9 0 0 1 9 9h-9z" fill="#ff9a78"/><path d="M11 10h9a9 9 0 0 1-9 9z" fill="#e8503c"/><rect y="6" width="10" height="10" rx="1" fill="#b91c2e"/><text x="2" y="14" class="t8">P</text></svg></button>
    <button aria-label="VS Code"><svg width="20" height="20" viewBox="0 0 20 20"><path d="M14.500 1 19 3v14l-4.500 2L6 11.500 2.500 14.500 1 13.500 4.500 10 1 6.500l1.500-1L6 8.500zM14.500 6 9.500 10l5 4z" fill="#2490dc" fill-rule="evenodd"/></svg></button>
    <button aria-label="R"><svg width="20" height="20" viewBox="0 0 20 20"><circle cx="10" cy="10" r="9.500" fill="#75a9db"/><text x="6" y="15" class="tr">R</text></svg></button>
    <button aria-label="Recortes"><svg width="20" height="20" viewBox="0 0 20 20"><ellipse cx="9" cy="7" rx="8" ry="5" transform="rotate(-25 9 7)" fill="#f2dede"/><path d="M1 10c1 4 4 5 7 5l4-6z" fill="#e0958f"/><path d="M10 7l4 7M15 8l-5 6" stroke="#888"/><circle cx="11" cy="16" r="2" fill="none" stroke="#1d8bd1" stroke-width="1.500"/><circle cx="16" cy="14" r="2" fill="none" stroke="#1d8bd1" stroke-width="1.500"/></svg></button>
    <button class="run" aria-label="Zoom"><svg width="20" height="20" viewBox="0 0 20 20"><circle cx="10" cy="10" r="10" fill="#0b5cff"/><text x="2" y="13" class="tz">zm</text></svg></button>
  </div>
  <div class="tray">
    <svg width="10" height="8" viewBox="0 0 10 8"><path d="M1 6l4-4 4 4" fill="none" stroke="#ddd"/></svg>
    <svg width="10" height="16" viewBox="0 0 10 16"><rect x="2.500" y="1" width="5" height="9" rx="2" fill="#fff"/><path d="M1 8c0 5 8 5 8 0M5 12v3" fill="none" stroke="#ddd"/></svg>
    <svg width="12" height="12" viewBox="0 0 12 12" fill="none" stroke="#ccc"><path d="M1 11C1 5 5 1 11 1M4 11c0-4 3-7 7-7M7 11c0-2 2-4 4-4"/><circle cx="10" cy="10" r="1" fill="#ccc"/></svg>
    <svg width="13" height="12" viewBox="0 0 13 12" fill="none" stroke="#ccc"><path d="M1 4.500h2L6 2v8L3 7.500H1zM8 4c1 1 1 3 0 4M9.500 2.500c2 2 2 5 0 7M11 1c2.500 3 2.500 7 0 10"/></svg>
    <svg width="14" height="12" viewBox="0 0 14 12" fill="none" stroke="#ccc"><path d="M5 3.500h7.500v6H4M13.500 5v3M.5 3h4v2c0 2-4 2-4 0zM1.500 1v2M3.500 1v2M2.500 6.500V9.500H4"/></svg>
    <div class="clock"><span>13:14</span><span>5/3/2026</span></div>
    <svg width="14" height="14" viewBox="0 0 14 14"><path d="M.5 1h13v9H9l-3 3v-3H.5z" fill="#eee"/><path d="M3 3.500h8M3 5.500h8M3 7.500h5" stroke="#333"/><circle cx="11" cy="10.500" r="3" fill="#ddd" stroke="#333" stroke-width=".6"/></svg>
  </div>
</div>
</body>
</html>
```
FILE: styles.css
```css
* { box-sizing: border-box; }
body {
  margin: 0; min-height: 100vh; display: flex; flex-direction: column;
  background: #141414; color: #e6e6e6;
  font: 9px/13px "Open Sans", "Noto Sans", sans-serif;
}
button { background: none; border: 0; padding: 0; margin: 0; color: inherit; font: inherit; }
input, select { font: inherit; color: inherit; background: none; border: 0; padding: 0; margin: 0; min-width: 0; }
a { color: inherit; text-decoration: none; }
h2, h3, h4, ul { margin: 0; padding: 0; font: inherit; list-style: none; }
svg { flex: none; display: block; }
.defs { width: 0; height: 0; position: absolute; }

/* title bar */
.titlebar { display: flex; align-items: center; height: 28px; padding-left: 12px; }
.tb { width: 24px; }
.doc { padding-top: 6px; }
.tri { margin-left: 5px; }
.user { margin-left: auto; }
.avatar { width: 16px; height: 16px; border-radius: 8px; background: #333; margin-left: 9px; display: grid; place-items: center; }
.winbtns { display: flex; margin-left: 12px; }
.winbtns button { width: 35px; display: grid; place-items: center; }

/* ribbon tabs */
.tabs { display: flex; align-items: center; height: 28px; padding: 0 5px 4px 18px; gap: 17px; font-size: 11px; line-height: 18px; }
.tabs a { border-bottom: 2px solid transparent; margin-top: 1px; }
.tabs a:first-child { margin-right: 9px; }
.tabs .on { font-weight: 700; color: #fff; border-bottom-color: #2fa88a; }
.tabs .ctx { color: #3aa88c; font-weight: 600; }
.share { margin-left: auto; background: #11725a; color: #d5ebe4; border-radius: 2px; height: 19px; width: 85px; display: flex; align-items: center; justify-content: center; gap: 6px; font-size: 9px; }

/* ribbon */
.ribbon { display: grid; grid-template-columns: 130px 316px 112px 177px 148px 87px 50px 163px 1fr; margin: 0 6px 0 7px; height: 80px; background: #292929; border-radius: 6px; color: #f2f2f2; }
.group { display: flex; flex-direction: column; justify-content: space-between; padding: 7px 0 4px; border-right: 1px solid #3a3a3a; }
.group h2 { text-align: center; font-size: 8px; font-weight: 600; color: #ddd; }
.btns { display: grid; padding: 0 7px; }
.g-data .btns { grid-template-columns: 40fr 38fr 54fr 32fr 44fr 46fr 48fr; }
.g-query .btns { grid-template-columns: 59fr 45fr; padding: 0 4px; }
.g-insert .btns { grid-template-columns: 60fr 48fr 55fr; }
.g-calc .btns { grid-template-columns: 62fr 36fr 34fr; }
.g-cop .btns { grid-template-columns: 115fr 34fr; }
.g-pub .btns { padding: 0 2px; }
.rb { display: flex; flex-direction: column; align-items: center; justify-content: flex-start; white-space: nowrap; gap: 1px; min-width: 0; }
.rb span { text-align: center; }
.rb .c { width: 6px; height: 6px; display: inline-block; }
.off { color: #5f5f5f; }
.off svg { opacity: .8; }
.clip { display: flex; gap: 7px; padding-left: 9px; }
.clip-list { display: flex; flex-direction: column; gap: 7px; }
.sm { display: flex; align-items: center; gap: 4px; white-space: nowrap; }
.collapse { justify-self: end; align-self: end; padding: 7px; }

/* work area */
.work { flex: 1; display: grid; grid-template-columns: 33px 1fr 27px 173px 144px; border-bottom: 1px solid #555; }
.rail button { display: grid; place-items: center; width: 33px; height: 32px; border-left: 2px solid transparent; }
.rail .on { border-left-color: #2fa88a; }
.rail text, .t6, .t8, .tr, .tz { font-family: "Open Sans", sans-serif; font-weight: 700; fill: #fff; stroke: none; }
.rail text { font-size: 6px; fill: #d4d4d4; }
.rail .t5 { font-size: 5px; }

.canvas { position: relative; background: #fff; color: #666; border: 1px solid #777; border-width: 1px 1px 0; padding: 4px 4px 2px 3px; min-width: 0; }
.tools { display: flex; justify-content: flex-end; gap: 10px; height: 12px; }
.tools svg { fill: none; stroke: #777; }
.tools .dim { stroke: #bbb; }
.tools .gap { margin-left: 7px; }
.back { display: flex; align-items: center; gap: 12px; padding: 9px 0 13px 10px; color: #666; }
.visual { display: flex; justify-content: space-between; align-items: flex-start; }
.vscroll { width: 6px; height: 128px; border-radius: 3px; background: #a6a6a6; }
.cursor { position: absolute; left: 659px; top: 222px; }

.matrix { width: 827px; table-layout: fixed; border-collapse: separate; border-spacing: 0; border: 1px solid #2a86d8; border-bottom: 0; font-size: 10px; line-height: 13px; color: #0f3763; }
.c-name { width: 373px; }
.c-total { width: 40px; }
.matrix th, .matrix td { padding: 0 4px 0 0; vertical-align: top; text-align: right; font-weight: 400; border-right: 1px solid #a9c8f8; border-bottom: 1px solid #8bb9fa; background: #118dff; }
.matrix tbody th { text-align: left; padding: 0 12px 0 18px; border-right-color: #2f93ff; }
.matrix tbody tr:not(.alt) > * { padding-top: 1px; }
.matrix .alt > * { background: #12239e; color: #272a60; }
.matrix .tall > * { padding-bottom: 1px; }
.matrix .cat > * { font-weight: 700; color: #12315a; }
.matrix .cat > th { color: #fff; padding-left: 5px; }
.cat svg { display: inline-block; width: 8px; height: 8px; margin-right: 5px; }
.matrix tr > :last-child { border-right: 0; }
.matrix tbody tr > td:last-child, .matrix tfoot td:last-child { background: #252423; color: #fff; font-weight: 700; font-size: 11px; border-bottom-color: #c8c8c8; }
.matrix thead th { background: #252423; color: #f4f4f4; text-align: left; height: 21px; padding: 1px 0 0 4px; border-bottom-color: #2f93ff; border-right-color: #bbb; }
.matrix thead th:last-child { font-weight: 700; }
.matrix tbody .last > * { padding-top: 0; line-height: 12px; border-bottom: 0; }
.matrix tbody .last > td:last-child { border-bottom: 0; }
.matrix tfoot th, .matrix tfoot td { background: #252423; color: #fff; font-weight: 700; line-height: 12px; border-bottom: 1px solid #2f93ff; }
.matrix tfoot th { text-align: left; padding-left: 18px; }
.matrix tfoot td:last-child { border-bottom-color: #2f93ff; padding-right: 4px; padding-left: 0; }

.filters { background: #fff; color: #333; display: flex; flex-direction: column; align-items: center; padding-top: 12px; gap: 7px; }
.filters svg + svg { margin-top: 7px; }
.filters h2 { writing-mode: vertical-rl; font-size: 12px; font-weight: 600; line-height: 16px; }

/* side panes */
.viz { display: flex; flex-direction: column; border-right: 1px solid #555; }
.phead { display: flex; align-items: center; justify-content: space-between; padding: 7px 8px 5px 6px; }
.phead h2 { font-size: 12px; line-height: 18px; font-weight: 600; color: #fff; }
.viz h3 { font-weight: 600; color: #fff; padding-left: 6px; }
.modes { position: relative; display: flex; gap: 27px; padding: 3px 0 9px 6px; border-bottom: 1px solid #666; }
.modes button { width: 26px; height: 26px; display: grid; place-items: center; }
.modes .on { background: #292929; }
.notch { position: absolute; left: 65px; bottom: -1px; }
.search { display: flex; align-items: center; gap: 6px; background: #292929; border: 1px solid #666; border-radius: 2px; height: 22px; padding: 0 6px; font-size: 10px; }
.search input { flex: 1; }
.search input::placeholder { color: #ddd; opacity: 1; }
.s1 { margin: 6px 6px 0; }
.s2 { margin: 6px 3px 9px; height: 19px; padding: 0 9px; }
.s2 input::placeholder { color: #999; }
.subtabs { display: flex; gap: 13px; padding: 13px 14px 10px 10px; font-size: 10px; line-height: 17px; color: #ddd; }
.subtabs .on { font-weight: 700; color: #fff; border-bottom: 2px solid #2fa88a; }
.subtabs span { margin-left: auto; font-weight: 700; }
.props { position: relative; overflow: hidden; background: #292929; border-bottom: 1px solid #555; }
.card { background: #1f1f1f; margin: 0 7px 0 6px; padding: 0 7px; display: flex; flex-direction: column; align-items: flex-start; }
.card h4 { display: flex; align-items: center; gap: 6px; font-weight: 600; margin: -6px 0 10px; }
.card label { color: #f0f0f0; line-height: 14px; padding-bottom: 2px; }
.line { display: flex; gap: 4px; padding-bottom: 4px; width: 100%; }
.sel, .num { display: flex; align-items: center; justify-content: space-between; border: 1px solid #666; height: 19px; padding: 0 5px; background: #252525; }
.sel { flex: 1; }
.sel select { appearance: none; flex: 1; }
.num { width: 43px; padding: 0 4px; }
.num input { width: 24px; }
.biu { padding-bottom: 9px; }
.biu button { width: 19px; height: 19px; border: 1px solid #666; font-size: 12px; line-height: 16px; }
.biu i { font-family: "Liberation Serif", serif; }
.pick { display: flex; align-items: center; justify-content: space-between; width: 42px; height: 19px; padding: 0 5px 0 3px; border: 1px solid #666; background: #252525; margin-bottom: 7px; }
.sw { width: 13px; height: 13px; border: 1px solid #888; background: #252525; }
.sw.light { background: #118dff; }
.sw.deep { background: #1a1a9e; }
.toggle { display: flex; justify-content: space-between; align-items: center; width: 100%; padding-bottom: 13px; border-bottom: 1px solid #2c2c2c; }
.toggle label { padding: 0; }
.tg { display: grid; align-items: center; }
.tg > * { grid-area: 1 / 1; }
.tg svg { margin-left: 5px; }
.toggle input { appearance: none; width: 26px; height: 13px; border-radius: 7px; background: radial-gradient(circle at 18px 6px, #10382d 3px, #2fa88a 4px); }
.more { display: flex; align-items: center; gap: 4px; font-weight: 600; color: #fff; height: 31px; }
.more.col { padding-left: 8px; height: 34px; }
.reset { display: flex; align-items: center; width: 100%; padding: 2px 6px 2px 8px; color: #f0f0f0; }
.reset span { flex: 1; padding: 0 24px; }
.thumb { position: absolute; right: 0; top: 189px; width: 5px; height: 97px; border-radius: 2px; background: #a6a6a6; }

.root { display: flex; align-items: center; gap: 2px; padding-left: 10px; height: 18px; color: #f2f2f2; white-space: nowrap; }
.fields li { display: grid; grid-template-columns: 8px 10px 10px 1fr; column-gap: 6px; align-items: center; padding-left: 21px; height: 19px; color: #f0f0f0; }
.fields input { appearance: none; width: 10px; height: 10px; border: 1px solid #999; border-radius: 2px; display: grid; place-items: center; }
.fields input:checked { background: #3a9d80; border-color: #3a9d80; }
.fields input:checked::after { content: ""; width: 5px; height: 3px; border: solid #14382e; border-width: 0 0 1px 1px; transform: rotate(-45deg); }

/* status and task bars */
.status { display: flex; justify-content: space-between; align-items: center; height: 20px; padding: 0 14px 0 3px; border-bottom: 1px solid #888; }
.zoom { display: flex; align-items: center; gap: 3px; }
.zoom b { font-size: 11px; }
.zoom span { margin: 0 10px 0 7px; }
.zoom input { appearance: none; width: 82px; height: 2px; background: #888; }
.zoom input::-webkit-slider-thumb { appearance: none; width: 3px; height: 9px; background: #eee; }

.taskbar { display: flex; justify-content: space-between; height: 32px; background: linear-gradient(90deg, #1b1b1c, #1e2227 50%, #24282c); }
.apps { display: grid; grid-template-columns: repeat(19, 1fr); flex: 0 1 746px; }
.apps button { display: grid; place-items: center; border-bottom: 2px solid transparent; min-width: 0; }
.apps .run { border-bottom-color: #76b9ed; margin: 0 3px; }
.apps .act { background: #484848; margin: 0; }
.t6 { font-size: 6px; }
.t8 { font-size: 8px; }
.tr { font-size: 12px; font-family: "Liberation Serif", serif; font-weight: 400; }
.tz { font-size: 10px; }
.tray { display: flex; align-items: center; gap: 8px; padding-right: 16px; border-right: 1px solid #666; margin-right: 3px; }
.clock { display: flex; flex-direction: column; align-items: center; line-height: 14px; margin-right: 7px; font-size: 9px; }
```
